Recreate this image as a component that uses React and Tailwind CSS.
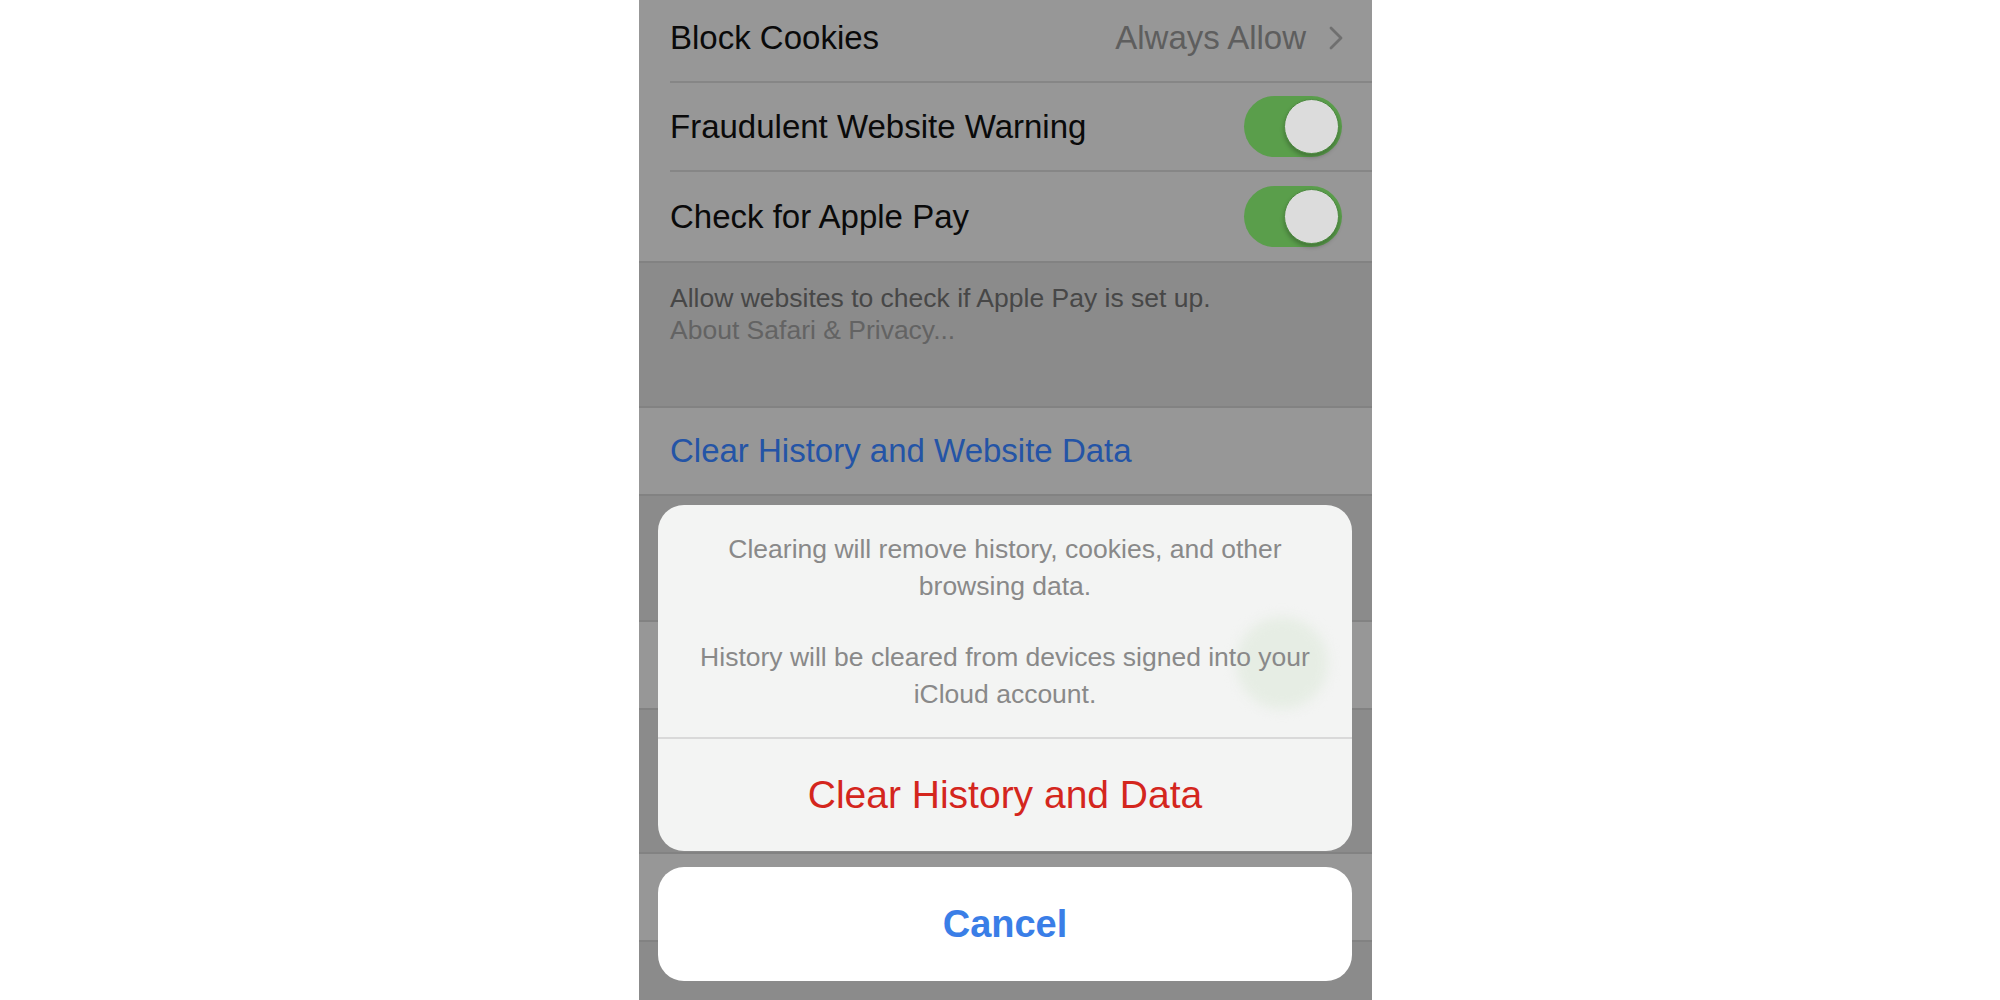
import React from 'react';

const font = { fontFamily: '"Liberation Sans", Arial, sans-serif' };

function Toggle() {
  return (
    <div className="w-[98px] h-[61px] rounded-full bg-[#5a9e4b] p-[3px] flex justify-end shrink-0">
      <div className="w-[55px] h-[55px] rounded-full bg-[#dcdcdc] border border-[#4d8a40] shadow-[0_3px_4px_rgba(0,0,0,0.25)]" />
    </div>
  );
}

function Chevron() {
  return (
    <svg width="16" height="26" viewBox="0 0 16 26" fill="none" className="shrink-0">
      <polyline points="3,3 13,13 3,23" stroke="#6f6f6f" strokeWidth="2.8" strokeLinecap="round" strokeLinejoin="round" />
    </svg>
  );
}

function Row({ label, children, last, height = 'h-[89px]' }) {
  return (
    <div className="bg-[#979797] pl-[31px]">
      <div className={`${height} flex items-center justify-between pr-[30px] ${last ? '' : 'border-b-2 border-[#868686]'}`}>
        <span className="text-[33px] text-[#0a0a0a] whitespace-nowrap">{label}</span>
        {children}
      </div>
    </div>
  );
}

export default function App() {
  return (
    <div className="w-[2000px] h-[1000px] bg-white pl-[639px]" style={font}>
      <div className="relative w-[733px] h-[1000px] bg-[#8b8b8b] overflow-hidden">
        {/* first group */}
        <div className="-mt-[6px] border-b-2 border-[#828282]">
          <Row label="Block Cookies">
            <div className="flex items-center gap-[22px] -mr-[2px]">
              <span className="text-[33px] text-[#5e5e5e]">Always Allow</span>
              <Chevron />
            </div>
          </Row>
          <Row label="Fraudulent Website Warning">
            <Toggle />
          </Row>
          <Row label="Check for Apple Pay" last>
            <Toggle />
          </Row>
        </div>

        {/* footer */}
        <div className="h-[143px] pl-[31px] pt-[19px] text-[26.5px] leading-[32px]">
          <p className="text-[#474747]">Allow websites to check if Apple Pay is set up.</p>
          <p className="text-[#636363]">About Safari &amp; Privacy...</p>
        </div>

        {/* clear history */}
        <div className="border-t-2 border-[#828282] border-b-2">
          <div className="h-[86px] bg-[#979797] pl-[31px] flex items-center">
            <span className="text-[33px] text-[#2454a6] whitespace-nowrap">Clear History and Website Data</span>
          </div>
        </div>

        {/* rows hidden behind the sheet */}
        <div className="h-[124px]" />
        <div className="border-t-2 border-b-2 border-[#828282] h-[90px] bg-[#979797] flex items-center justify-end pr-[30px]">
          <Toggle />
        </div>
        <div className="h-[142px]" />
        <div className="border-t-2 border-b-2 border-[#828282] h-[90px] bg-[#979797]" />

        {/* action sheet */}
        <div className="absolute left-[19px] right-[20px] bottom-[19px] flex flex-col gap-[16px]">
          <div className="relative rounded-[26px] bg-[#f3f4f3] overflow-hidden">
            {/* toggle showing through the sheet */}
            <div className="absolute left-[578px] top-[112px] w-[92px] h-[92px] rounded-full bg-[#e6ede4] blur-[6px]" />
            <div className="relative pt-[26px] pb-[24px] text-center text-[26.5px] leading-[37px] text-[#898989] whitespace-nowrap">
              <p>
                Clearing will remove history, cookies, and other
                <br />
                browsing data.
              </p>
              <p className="mt-[34px]">
                History will be cleared from devices signed into your
                <br />
                iCloud account.
              </p>
            </div>
            <div className="relative h-[114px] border-t-2 border-[#d9d9d9] flex items-center justify-center">
              <span className="text-[39px] text-[#d4261d]">Clear History and Data</span>
            </div>
          </div>
          <div className="h-[114px] rounded-[26px] bg-white flex items-center justify-center">
            <span className="text-[38px] font-bold text-[#3a7ee7]">Cancel</span>
          </div>
        </div>
      </div>
    </div>
  );
}
